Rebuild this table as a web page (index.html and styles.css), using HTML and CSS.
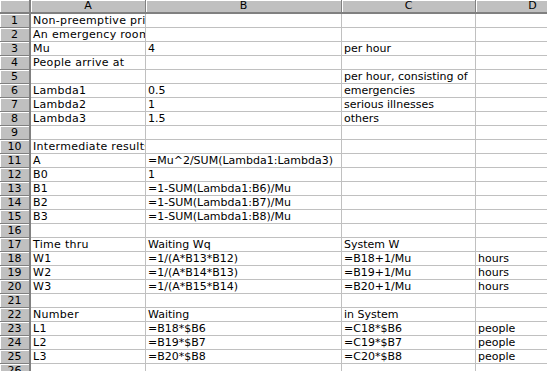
FILE: index.html
```html
<!DOCTYPE html>
<html>
<head>
<meta charset="utf-8">
<link rel="stylesheet" href="styles.css">
</head>
<body>
<div class="viewport">
<table class="sheet">
<colgroup>
<col class="c-rh"><col class="c-a"><col class="c-b"><col class="c-c"><col class="c-d">
</colgroup>
<thead>
<tr><th class="corner"></th><th>A</th><th>B</th><th>C</th><th>D</th></tr>
</thead>
<tbody>
<tr><th>1</th><td>Non-preemptive priority</td><td></td><td></td><td></td></tr>
<tr><th>2</th><td>An emergency room</td><td></td><td></td><td></td></tr>
<tr><th>3</th><td>Mu</td><td>4</td><td>per hour</td><td></td></tr>
<tr><th>4</th><td>People arrive at</td><td></td><td></td><td></td></tr>
<tr><th>5</th><td></td><td></td><td>per hour, consisting of</td><td></td></tr>
<tr><th>6</th><td>Lambda1</td><td>0.5</td><td>emergencies</td><td></td></tr>
<tr><th>7</th><td>Lambda2</td><td>1</td><td>serious illnesses</td><td></td></tr>
<tr><th>8</th><td>Lambda3</td><td>1.5</td><td>others</td><td></td></tr>
<tr><th>9</th><td></td><td></td><td></td><td></td></tr>
<tr><th>10</th><td>Intermediate results</td><td></td><td></td><td></td></tr>
<tr><th>11</th><td>A</td><td>=Mu^2/SUM(Lambda1:Lambda3)</td><td></td><td></td></tr>
<tr><th>12</th><td>B0</td><td>1</td><td></td><td></td></tr>
<tr><th>13</th><td>B1</td><td>=1-SUM(Lambda1:B6)/Mu</td><td></td><td></td></tr>
<tr><th>14</th><td>B2</td><td>=1-SUM(Lambda1:B7)/Mu</td><td></td><td></td></tr>
<tr><th>15</th><td>B3</td><td>=1-SUM(Lambda1:B8)/Mu</td><td></td><td></td></tr>
<tr><th>16</th><td></td><td></td><td></td><td></td></tr>
<tr><th>17</th><td>Time thru</td><td>Waiting Wq</td><td>System W</td><td></td></tr>
<tr><th>18</th><td>W1</td><td>=1/(A*B13*B12)</td><td>=B18+1/Mu</td><td>hours</td></tr>
<tr><th>19</th><td>W2</td><td>=1/(A*B14*B13)</td><td>=B19+1/Mu</td><td>hours</td></tr>
<tr><th>20</th><td>W3</td><td>=1/(A*B15*B14)</td><td>=B20+1/Mu</td><td>hours</td></tr>
<tr><th>21</th><td></td><td></td><td></td><td></td></tr>
<tr><th>22</th><td>Number</td><td>Waiting</td><td>in System</td><td></td></tr>
<tr><th>23</th><td>L1</td><td>=B18*$B6</td><td>=C18*$B6</td><td>people</td></tr>
<tr><th>24</th><td>L2</td><td>=B19*$B7</td><td>=C19*$B7</td><td>people</td></tr>
<tr><th>25</th><td>L3</td><td>=B20*$B8</td><td>=C20*$B8</td><td>people</td></tr>
<tr><th>26</th><td></td><td></td><td></td><td></td></tr>
</tbody>
</table>
</div>
</body>
</html>
```
FILE: styles.css
```css
html, body {
  margin: 0;
  padding: 0;
  background: #ffffff;
}
body {
  font-family: "DejaVu Sans", Verdana, sans-serif;
  font-size: 11px;
  color: #000;
}
.viewport {
  width: 547px;
  height: 371px;
  overflow: hidden;
}
.sheet {
  border-collapse: separate;
  border-spacing: 0;
  table-layout: fixed;
  width: 590px;
}
.c-rh { width: 31px; }
.c-a { width: 115px; }
.c-b { width: 196px; }
.c-c { width: 134px; }
.c-d { width: 114px; }

.sheet th, .sheet td {
  padding: 0;
  height: 13px;
  line-height: 13px;
  white-space: nowrap;
  overflow: hidden;
  font-weight: normal;
  box-sizing: content-box;
}
.sheet td {
  padding-left: 2px;
  border-right: 1px solid #c0c0c0;
  border-bottom: 1px solid #c0c0c0;
  text-align: left;
}
.sheet td:nth-child(2) {
  letter-spacing: 0.3px;
}
.sheet thead th {
  height: 12px;
  line-height: 12px;
  background: #c0c0c0;
  border-right: 1px solid #808080;
  border-bottom: 2px solid #808080;
  box-shadow: inset 1px 1px 0 #ffffff;
  text-align: center;
}
.sheet thead th.corner {
  border-right: 2px solid #808080;
}
.sheet tbody th {
  background: #c0c0c0;
  border-right: 2px solid #808080;
  border-bottom: 1px solid #808080;
  box-shadow: inset 1px 1px 0 #ffffff;
  text-align: center;
}
```
